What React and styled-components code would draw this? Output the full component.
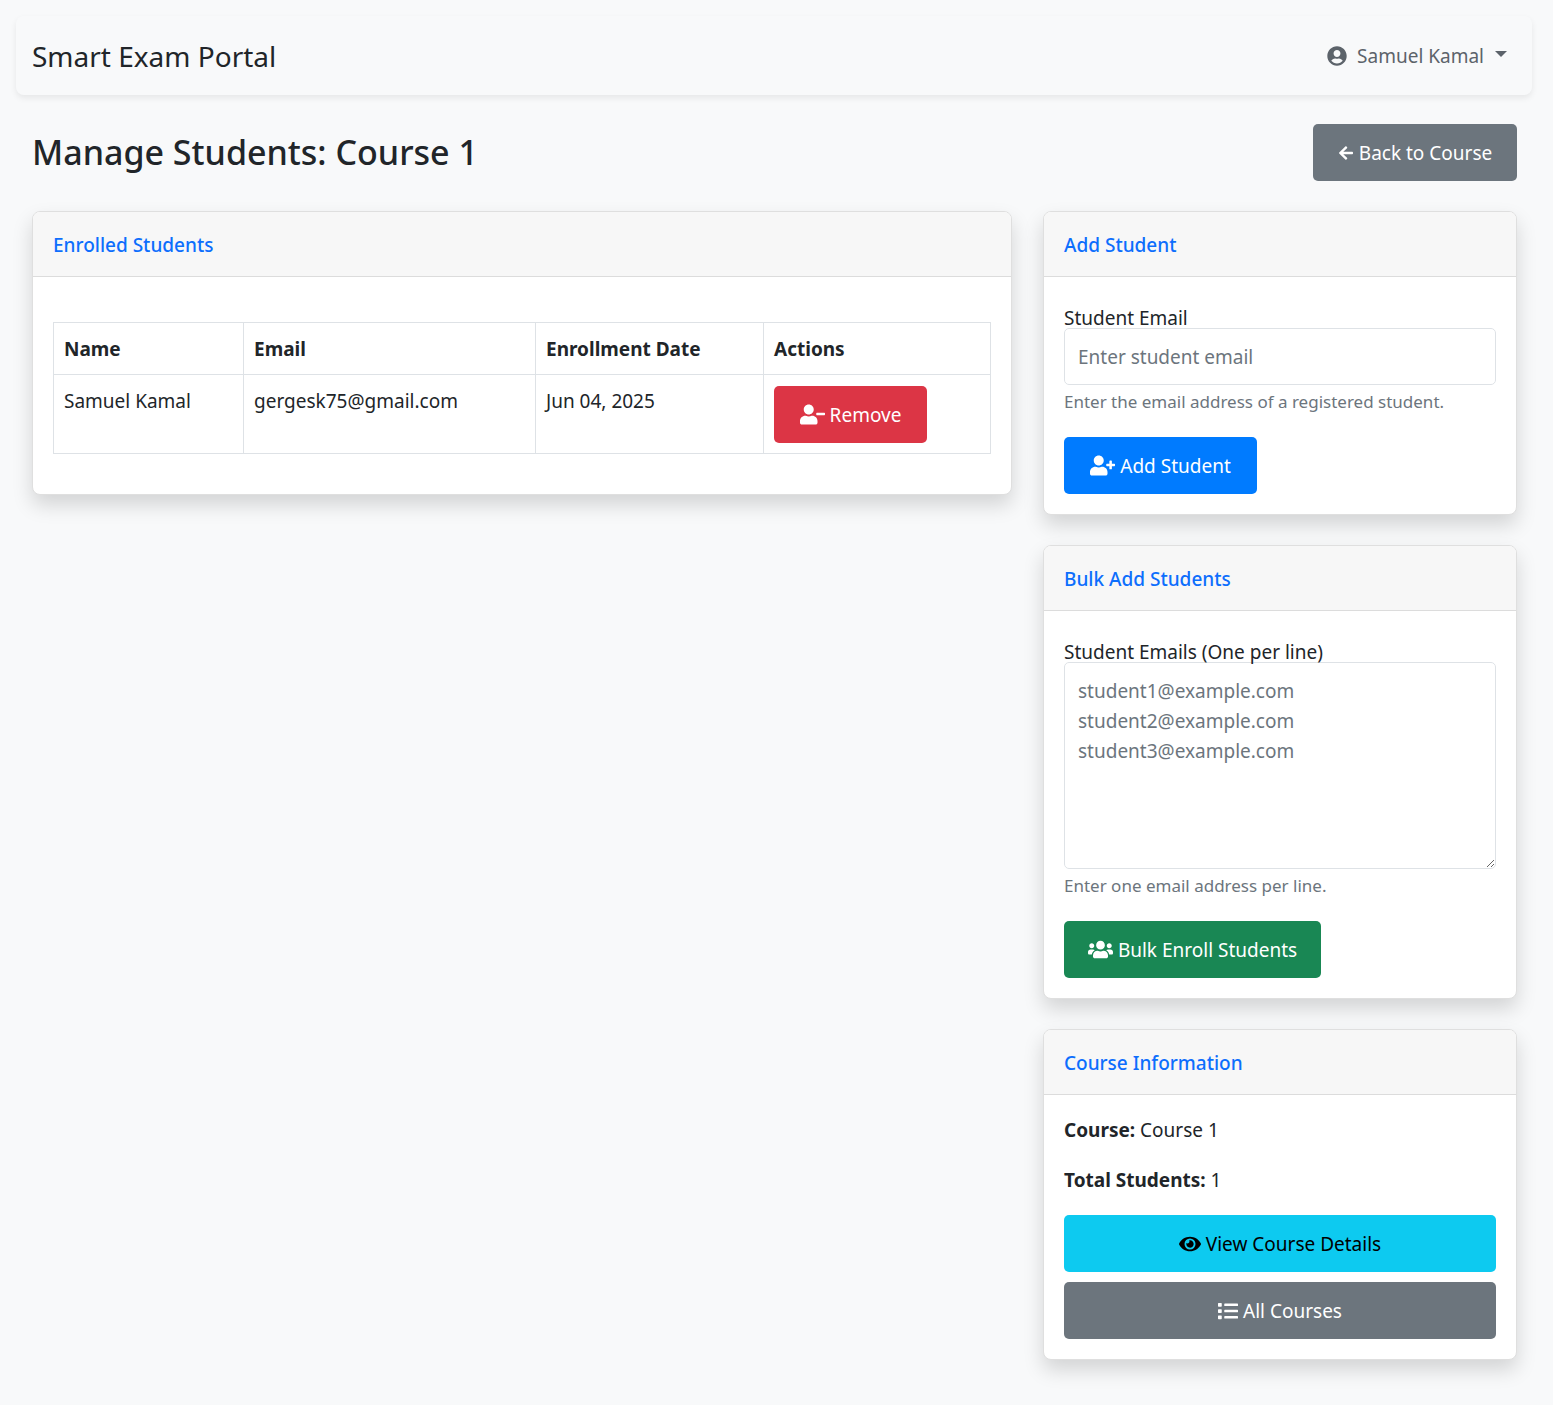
import styled, { createGlobalStyle } from "styled-components"
import { FaArrowLeft, FaEye, FaList, FaUserCircle, FaUserMinus, FaUserPlus, FaUsers } from "react-icons/fa"

const font = `"Noto Sans", "Open Sans", sans-serif`

const GlobalStyle = createGlobalStyle`
html, body {
  margin: 0;
  background: #f8f9fa;
  color: #212529;
  font-family: ${font};
  font-size: 19px;
  line-height: 30px;
}
* {
  box-sizing: border-box;
}
`

const colors = {
    primary: { bg: "#007bff", fg: "#fff" },
    danger: { bg: "#dc3545", fg: "#fff" },
    success: { bg: "#198754", fg: "#fff" },
    info: { bg: "#0dcaf0", fg: "#000" },
    secondary: { bg: "#6c757d", fg: "#fff" },
}

const Page = styled.div`
height: 1405px;
padding: 16px 36px 0 32px;
`

const Navbar = styled.nav`
display: flex;
justify-content: space-between;
align-items: center;
height: 79px;
margin: 0 -15px 0 -16px;
padding: 0 25px 0 16px;
border-radius: 8px;
box-shadow: 0 3px 6px rgba(0, 0, 0, 0.075);
`

const Brand = styled.span`
font-size: 28px;
`

const UserMenu = styled.div`
display: flex;
align-items: center;
gap: 10px;
color: #5c636a;
font-size: 19px;
`

const Caret = styled.span`
width: 0;
height: 0;
margin-left: 1px;
margin-bottom: 4px;
border-top: 6px solid #5c636a;
border-left: 6px solid transparent;
border-right: 6px solid transparent;
`

const PageHeader = styled.div`
display: flex;
justify-content: space-between;
align-items: center;
margin: 29px 0 30px;
`

const Title = styled.h1`
margin: 0;
font-size: 34px;
font-weight: 500;
line-height: 1.2;
`

const Columns = styled.div`
display: grid;
grid-template-columns: 980px 474px;
gap: 31px;
align-items: start;
`

const Stack = styled.div`
display: flex;
flex-direction: column;
gap: 30px;
`

const Card = styled.section`
border: 1px solid #dfdfdf;
border-radius: 8px;
background: #fff;
box-shadow: 0 10px 20px rgba(0, 0, 0, 0.15);
overflow: hidden;
`

const CardHeader = styled.h2`
margin: 0;
height: 65px;
padding: 18px 20px 0;
border-bottom: 1px solid #dcdcdc;
background: #f7f7f7;
color: #0d6efd;
font-size: 19px;
font-weight: 500;
line-height: 30px;
`

const CardBody = styled.div`
padding: ${props => props.$top || 20}px 20px 20px;
`

const Table = styled.table`
width: 100%;
border-collapse: collapse;
table-layout: fixed;
margin: 25px 0 20px;
`

const Th = styled.th`
width: ${props => props.$width}px;
padding: 11px 10px 10px;
border: 1px solid #dee2e6;
text-align: left;
font-weight: 700;
`

const Td = styled.td`
padding: 11px 10px 10px;
border: 1px solid #dee2e6;
vertical-align: top;
`

const Button = styled.button`
display: ${props => props.$block ? "flex" : "inline-flex"};
justify-content: center;
align-items: center;
gap: 5px;
width: ${props => props.$block ? "100%" : props.$width ? props.$width + "px" : "auto"};
height: 57px;
padding: 0;
border: 0;
border-radius: 5px;
background: ${props => colors[props.$variant].bg};
color: ${props => colors[props.$variant].fg};
font-family: ${font};
font-size: 19px;
`

const Label = styled.label`
display: block;
height: 31px;
padding-top: 6px;
`

const Input = styled.input`
display: block;
width: 100%;
height: 57px;
padding: 0 13px;
border: 1px solid #dee2e6;
border-radius: 5px;
background: #fff;
font-family: ${font};
font-size: 19px;
outline: none;
&::placeholder { color: #6c757d; }
`

const Textarea = styled.textarea`
display: block;
width: 100%;
height: 207px;
padding: 13px;
border: 1px solid #dee2e6;
border-radius: 5px;
background: #fff;
font-family: ${font};
font-size: 19px;
line-height: 30px;
outline: none;
&::placeholder { color: #6c757d; }
`

const Help = styled.div`
margin: 3px 0 24px;
height: 25px;
color: #6c757d;
font-size: 17px;
line-height: 28px;
`

const InfoLine = styled.p`
margin: 0 0 20px;
`

const ButtonStack = styled.div`
display: flex;
flex-direction: column;
gap: 10px;
`

export default function App() {
    return (
        <Page>
            <GlobalStyle />
            <Navbar>
                <Brand>Smart Exam Portal</Brand>
                <UserMenu><FaUserCircle size={20} /> Samuel Kamal <Caret /></UserMenu>
            </Navbar>
            <PageHeader>
                <Title>Manage Students: Course 1</Title>
                <Button $variant="secondary" $width={204}><FaArrowLeft size={16} /> Back to Course</Button>
            </PageHeader>
            <Columns>
                <Card>
                    <CardHeader>Enrolled Students</CardHeader>
                    <CardBody>
                        <Table>
                            <thead>
                                <tr>
                                    <Th $width={190}>Name</Th>
                                    <Th $width={292}>Email</Th>
                                    <Th $width={228}>Enrollment Date</Th>
                                    <Th>Actions</Th>
                                </tr>
                            </thead>
                            <tbody>
                                <tr>
                                    <Td>Samuel Kamal</Td>
                                    <Td>gergesk75@gmail.com</Td>
                                    <Td>Jun 04, 2025</Td>
                                    <Td><Button $variant="danger" $width={153}><FaUserMinus size={25} /> Remove</Button></Td>
                                </tr>
                            </tbody>
                        </Table>
                    </CardBody>
                </Card>
                <Stack>
                    <Card>
                        <CardHeader>Add Student</CardHeader>
                        <CardBody $top={20}>
                            <Label>Student Email</Label>
                            <Input placeholder="Enter student email" />
                            <Help>Enter the email address of a registered student.</Help>
                            <Button $variant="primary" $width={193}><FaUserPlus size={25} /> Add Student</Button>
                        </CardBody>
                    </Card>
                    <Card>
                        <CardHeader>Bulk Add Students</CardHeader>
                        <CardBody>
                            <Label>Student Emails (One per line)</Label>
                            <Textarea placeholder={"student1@example.com\nstudent2@example.com\nstudent3@example.com"} />
                            <Help>Enter one email address per line.</Help>
                            <Button $variant="success" $width={257}><FaUsers size={25} /> Bulk Enroll Students</Button>
                        </CardBody>
                    </Card>
                    <Card>
                        <CardHeader>Course Information</CardHeader>
                        <CardBody>
                            <InfoLine><b>Course:</b> Course 1</InfoLine>
                            <InfoLine><b>Total Students:</b> 1</InfoLine>
                            <ButtonStack>
                                <Button $variant="info" $block><FaEye size={22} /> View Course Details</Button>
                                <Button $variant="secondary" $block><FaList size={20} /> All Courses</Button>
                            </ButtonStack>
                        </CardBody>
                    </Card>
                </Stack>
            </Columns>
        </Page>
    )
}
